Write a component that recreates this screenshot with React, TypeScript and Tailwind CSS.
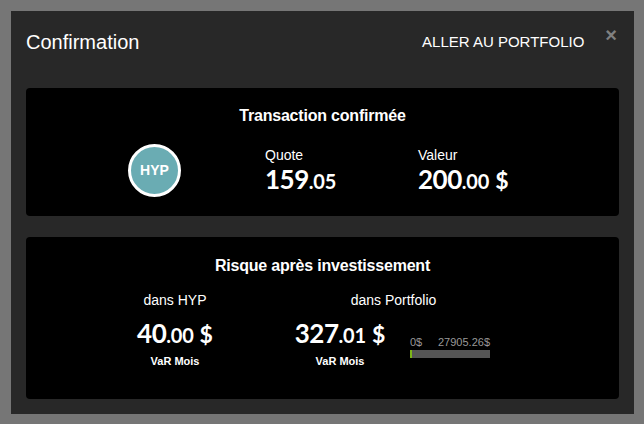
const Amount = ({ int, dec, cur }: { int: string; dec: string; cur?: boolean }) => (
  <div className="font-['Lato',sans-serif] font-bold text-white leading-[30px] whitespace-nowrap">
    <span className="text-[26px] tracking-[-0.5px]">{int}</span>
    <span className="text-[20px] tracking-[-0.2px]">.{dec}</span>
    {cur && <span className="text-[23px] ml-[6px]">$</span>}
  </div>
);

export default function App() {
  return (
    <div className="w-[644px] h-[424px] bg-[#767676] pt-[11px] pl-[11px] pr-[10px] pb-[10px] font-['Liberation_Sans',Arial,sans-serif] text-white">
      <div className="h-[403px] bg-[#282828] px-[15px] flex flex-col">
        <div className="h-[62px] mb-[15px] flex items-center justify-between">
          <div className="text-[20px] leading-[24px]">Confirmation</div>
          <div className="flex items-center">
            <div className="text-[15px] leading-[18px]">ALLER AU PORTFOLIO</div>
            <div className="ml-[21px] mr-[2px] -mt-[14px] text-[#808080] text-[20px] font-bold leading-[20px]">×</div>
          </div>
        </div>

        <div className="h-[128px] bg-black rounded-[4px] flex flex-col items-center pt-[19px]">
          <div className="text-[16px] leading-[18px] font-bold tracking-[-0.2px]">Transaction confirmée</div>
          <div className="mt-[19px] w-full flex items-start">
            <div className="ml-[102px] w-[53px] h-[53px] rounded-full border-[3px] border-white bg-[#6aacb3] flex items-center justify-center text-[14px] font-bold">
              HYP
            </div>
            <div className="ml-[84px] w-[153px] pt-[3px]">
              <div className="text-[14px] leading-[17px]">Quote</div>
              <Amount int="159" dec="05" />
            </div>
            <div className="pt-[3px]">
              <div className="text-[14px] leading-[17px]">Valeur</div>
              <Amount int="200" dec="00" cur />
            </div>
          </div>
        </div>

        <div className="mt-[21px] h-[162px] bg-black rounded-[4px] flex flex-col items-center pt-[20px]">
          <div className="text-[16px] leading-[18px] font-bold tracking-[-0.2px]">Risque après investissement</div>
          <div className="mt-[17px] w-full flex items-start">
            <div className="ml-[89px] w-[120px] flex flex-col items-center">
              <div className="text-[14px] leading-[17px]">dans HYP</div>
              <div className="mt-[9px]"><Amount int="40" dec="00" cur /></div>
              <div className="mt-[3px] text-[11px] leading-[13px] font-bold">VaR Mois</div>
            </div>
            <div className="ml-[62px] w-[193px] flex flex-col items-center">
              <div className="text-[14px] leading-[17px]">dans Portfolio</div>
              <div className="w-full flex items-start">
                <div className="w-[86px] flex flex-col items-center">
                  <div className="mt-[9px]"><Amount int="327" dec="01" cur /></div>
                  <div className="mt-[3px] text-[11px] leading-[13px] font-bold">VaR Mois</div>
                </div>
                <div className="ml-[27px] w-[80px] mt-[27px]">
                  <div className="flex justify-between text-[11px] leading-[13px] text-[#999]">
                    <span>0$</span>
                    <span>27905.26$</span>
                  </div>
                  <div className="mt-[1px] h-[8px] bg-[#555] flex">
                    <div className="w-[2px] h-full bg-[#7cb518]" />
                  </div>
                </div>
              </div>
            </div>
          </div>
        </div>
      </div>
    </div>
  );
}
